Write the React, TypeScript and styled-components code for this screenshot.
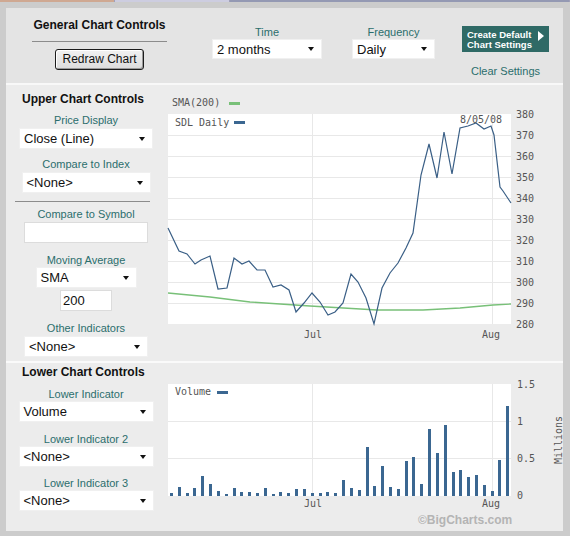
import styled, { createGlobalStyle } from 'styled-components';

const GlobalStyle = createGlobalStyle`
    body {
        margin: 0;
        background: #cccccc;
        font-family: "Liberation Sans", Arial, sans-serif;
    }
`;

const TEAL = '#2b6e6c';
const LINE_BLUE = '#3a5f86';
const BAR_BLUE = '#3b6791';
const SMA_GREEN = '#78c078';
const AXIS_TEXT = '#555555';
const MONO = '"DejaVu Sans Mono", monospace';

const Page = styled.div`
    width: 570px;
    height: 536px;
    background: #cccccc;
`;

const TabStrip = styled.div`
    display: flex;
    height: 2px;
`;

const Tab = styled.div<{ $color: string; $w?: number }>`
    background: ${(p) => p.$color};
    ${(p) => (p.$w ? `width: ${p.$w}px;` : 'flex: 1;')}
    border-right: 1px solid #a0a0b8;
`;

const Panel = styled.div`
    margin: 6px 7px 0 6px;
    width: 557px;
    background: #ececec;
`;

const Header = styled.div`
    display: flex;
    align-items: flex-start;
    box-sizing: border-box;
    height: 77px;
    padding-top: 10px;
    background: #e4e4e4;
    border-bottom: 2px solid #f8f8f8;
`;

const GeneralBlock = styled.div`
    display: flex;
    flex-direction: column;
    align-items: center;
    width: 135px;
    margin-left: 26px;
`;

const GeneralTitle = styled.div`
    align-self: stretch;
    font-size: 12px;
    font-weight: bold;
    line-height: 14px;
    text-align: center;
    color: #111;
    padding-bottom: 9px;
    border-bottom: 1px solid #8c8c8c;
`;

const RedrawButton = styled.div`
    margin-top: 7px;
    box-sizing: border-box;
    width: 89px;
    height: 21px;
    line-height: 19px;
    text-align: center;
    font-size: 12px;
    color: #111;
    background: linear-gradient(#f2f2f2, #dcdcdc);
    border: 1px solid #1c1c1c;
    border-radius: 3px;
    box-shadow: inset -1px -1px 0 #9a9a9a, inset 1px 1px 0 #ffffff;
`;

const FieldGroup = styled.div<{ $ml: number }>`
    display: flex;
    flex-direction: column;
    align-items: center;
    margin-left: ${(p) => p.$ml}px;
    margin-top: 8px;
`;

const Label = styled.div<{ $mt?: number }>`
    font-size: 11px;
    line-height: 13px;
    color: ${TEAL};
    text-align: center;
    margin-top: ${(p) => p.$mt ?? 0}px;
    white-space: nowrap;
`;

const SelectBox = styled.div<{ $w: number; $h?: number; $mt?: number }>`
    display: flex;
    align-items: center;
    justify-content: space-between;
    box-sizing: border-box;
    width: ${(p) => p.$w}px;
    height: ${(p) => p.$h ?? 21}px;
    margin-top: ${(p) => p.$mt ?? 0}px;
    padding-left: 4px;
    background: #ffffff;
    border: 1px solid #f0f0f0;
    font-size: 13px;
    color: #111;

    &::after {
        content: '';
        margin-right: 7px;
        border-left: 3.5px solid transparent;
        border-right: 3.5px solid transparent;
        border-top: 4px solid #111;
    }
`;

const TextBox = styled.div<{ $w: number; $mt?: number }>`
    box-sizing: border-box;
    width: ${(p) => p.$w}px;
    height: 21px;
    margin-top: ${(p) => p.$mt ?? 0}px;
    padding-left: 2px;
    line-height: 20px;
    background: #ffffff;
    border: 1px solid #dcdcdc;
    font-size: 13px;
    color: #111;
`;

const SettingsGroup = styled.div`
    display: flex;
    flex-direction: column;
    align-items: center;
    margin-left: 27px;
    margin-top: 8px;
    width: 87px;
`;

const CreateButton = styled.div`
    display: flex;
    align-items: flex-start;
    justify-content: space-between;
    box-sizing: border-box;
    width: 87px;
    height: 26px;
    padding: 4px 5px 0 5px;
    background: #2f6a66;
    color: #ffffff;
    font-size: 9.5px;
    font-weight: bold;
    line-height: 10px;
    white-space: nowrap;
`;

const Arrow = styled.span`
    margin-top: 1px;
    border-top: 5px solid transparent;
    border-bottom: 5px solid transparent;
    border-left: 6px solid #ffffff;
`;

const ClearLink = styled.div`
    margin-top: 13px;
    font-size: 11px;
    line-height: 13px;
    color: ${TEAL};
    white-space: nowrap;
`;

const Section = styled.div<{ $h: number; $divider?: boolean }>`
    display: flex;
    height: ${(p) => p.$h}px;
    ${(p) => (p.$divider ? 'border-bottom: 2px solid #fafafa;' : '')}
`;

const Controls = styled.div`
    display: flex;
    flex-direction: column;
    align-items: center;
    width: 160px;
`;

const SectionTitle = styled.div<{ $mt: number }>`
    align-self: flex-start;
    margin: ${(p) => p.$mt}px 0 0 16px;
    font-size: 12px;
    font-weight: bold;
    line-height: 14px;
    color: #111;
`;

const Divider = styled.div`
    align-self: flex-start;
    margin: 8px 0 0 9px;
    width: 135px;
    height: 1px;
    background: #8c8c8c;
`;

const ChartBox = styled.div`
    width: 397px;
`;

const priceLine: [number, number][] = [
    [168, 228], [179, 251], [187, 254], [195, 264], [201, 260], [210, 256], [218, 289],
    [227, 288], [234, 258], [242, 264], [249, 261], [257, 270], [265, 270], [273, 287],
    [281, 285], [289, 290], [296, 312], [304, 303], [312, 293], [320, 302], [328, 315],
    [335, 312], [343, 303], [351, 274], [358, 282], [366, 298], [374, 324], [382, 288],
    [390, 273], [398, 263], [406, 248], [413, 233], [421, 175], [429, 144], [437, 178],
    [444, 132], [452, 174], [460, 128], [468, 126], [476, 123], [484, 129], [491, 126],
    [494, 135], [500, 187], [503, 191], [511, 203],
];

const smaLine: [number, number][] = [
    [168, 293], [210, 297], [250, 302], [310, 306], [377, 310], [423, 310],
    [460, 308], [493, 305], [511, 304],
];

const volumeTops = [
    493, 487, 493, 488, 476, 484, 491, 494, 488, 492, 492, 493, 488, 494, 492, 493,
    489, 489, 493, 493, 492, 493, 480, 488, 490, 447, 486, 466, 487, 489, 461, 457,
    484, 429, 453, 425, 472, 470, 477, 475, 485, 491, 460, 406,
];

const toPoints = (pts: [number, number][]) => pts.map(([x, y]) => `${x},${y}`).join(' ');

function UpperChart() {
    const grid = [135, 156, 177, 198, 219, 240, 261, 282, 303];
    const labels = [380, 370, 360, 350, 340, 330, 320, 310, 300, 290, 280];
    return (
        <svg width="397" height="276" viewBox="166 85 397 276" fontFamily={MONO} fontSize="10">
            <text x="172" y="106" fill={AXIS_TEXT}>SMA(200)</text>
            <rect x="229" y="102" width="11" height="3" fill={SMA_GREEN} />
            <rect x="168" y="114" width="343" height="210" fill="#ffffff" />
            {grid.map((y) => (
                <line key={y} x1="168" x2="511" y1={y + 0.5} y2={y + 0.5} stroke="#e8e8e8" />
            ))}
            <line x1="312.5" x2="312.5" y1="114" y2="324" stroke="#e8e8e8" />
            <line x1="492.5" x2="492.5" y1="114" y2="324" stroke="#e8e8e8" />
            <text x="175" y="126" fill={AXIS_TEXT}>SDL Daily</text>
            <rect x="234" y="121" width="11" height="3" fill={BAR_BLUE} />
            <polyline points={toPoints(smaLine)} fill="none" stroke={SMA_GREEN} strokeWidth="1.3" />
            <polyline points={toPoints(priceLine)} fill="none" stroke={LINE_BLUE} strokeWidth="1.2" />
            <text x="460" y="123" fill={AXIS_TEXT}>8/05/08</text>
            {labels.map((v, i) => (
                <text key={v} x="516" y={118 + i * 21} fill={AXIS_TEXT}>{v}</text>
            ))}
            <text x="304" y="338" fill={AXIS_TEXT}>Jul</text>
            <text x="482" y="338" fill={AXIS_TEXT}>Aug</text>
        </svg>
    );
}

function LowerChart() {
    const axis = [['1.5', 388], ['1', 425], ['0.5', 462], ['0', 499]] as const;
    return (
        <svg width="397" height="168" viewBox="166 363 397 168" fontFamily={MONO} fontSize="10">
            <rect x="168" y="384" width="343" height="112" fill="#ffffff" />
            <line x1="168" x2="511" y1="421.5" y2="421.5" stroke="#e8e8e8" />
            <line x1="168" x2="511" y1="458.5" y2="458.5" stroke="#e8e8e8" />
            <line x1="312.5" x2="312.5" y1="384" y2="496" stroke="#e8e8e8" />
            <line x1="492.5" x2="492.5" y1="384" y2="496" stroke="#e8e8e8" />
            <text x="175" y="395" fill={AXIS_TEXT}>Volume</text>
            <rect x="217" y="391" width="11" height="3" fill={BAR_BLUE} />
            {volumeTops.map((top, i) => {
                const cx = 171.5 + i * 7.82;
                return <rect key={i} x={Math.round(cx - 1.5)} y={top} width="3" height={496 - top} fill={BAR_BLUE} />;
            })}
            {axis.map(([t, y]) => (
                <text key={t} x="517" y={y} fill={AXIS_TEXT}>{t}</text>
            ))}
            <text x="0" y="0" fill={AXIS_TEXT} textAnchor="middle" transform="translate(562 440) rotate(-90)">Millions</text>
            <text x="304" y="507" fill={AXIS_TEXT}>Jul</text>
            <text x="482" y="507" fill={AXIS_TEXT}>Aug</text>
            <text x="418" y="524" fill="#b4b4b4" fontFamily='"Liberation Sans", Arial, sans-serif' fontSize="12" fontWeight="bold">©BigCharts.com</text>
        </svg>
    );
}

export default function App() {
    return (
        <Page>
            <GlobalStyle />
            <TabStrip>
                <Tab $color="#cfa892" $w={114} />
                <Tab $color="#cdcde0" $w={114} />
                <Tab $color="#9499b3" />
            </TabStrip>
            <Panel>
                <Header>
                    <GeneralBlock>
                        <GeneralTitle>General Chart Controls</GeneralTitle>
                        <RedrawButton>Redraw Chart</RedrawButton>
                    </GeneralBlock>
                    <FieldGroup $ml={45}>
                        <Label>Time</Label>
                        <SelectBox $w={110} $h={20}>2 months</SelectBox>
                    </FieldGroup>
                    <FieldGroup $ml={30}>
                        <Label>Frequency</Label>
                        <SelectBox $w={83} $h={20}>Daily</SelectBox>
                    </FieldGroup>
                    <SettingsGroup>
                        <CreateButton>
                            <span>Create Default<br />Chart Settings</span>
                            <Arrow />
                        </CreateButton>
                        <ClearLink>Clear Settings</ClearLink>
                    </SettingsGroup>
                </Header>

                <Section $h={276} $divider>
                    <Controls>
                        <SectionTitle $mt={7}>Upper Chart Controls</SectionTitle>
                        <Label $mt={8}>Price Display</Label>
                        <SelectBox $w={134} $mt={1}>Close (Line)</SelectBox>
                        <Label $mt={9}>Compare to Index</Label>
                        <SelectBox $w={129} $mt={1}>&lt;None&gt;</SelectBox>
                        <Divider />
                        <Label $mt={6}>Compare to Symbol</Label>
                        <TextBox $w={124} $mt={1} />
                        <Label $mt={11}>Moving Average</Label>
                        <SelectBox $w={101}>SMA</SelectBox>
                        <TextBox $w={52} $mt={2}>200</TextBox>
                        <Label $mt={11}>Other Indicators</Label>
                        <SelectBox $w={124} $mt={1}>&lt;None&gt;</SelectBox>
                    </Controls>
                    <ChartBox>
                        <UpperChart />
                    </ChartBox>
                </Section>

                <Section $h={168}>
                    <Controls>
                        <SectionTitle $mt={2}>Lower Chart Controls</SectionTitle>
                        <Label $mt={9}>Lower Indicator</Label>
                        <SelectBox $w={135}>Volume</SelectBox>
                        <Label $mt={11}>Lower Indicator 2</Label>
                        <SelectBox $w={135}>&lt;None&gt;</SelectBox>
                        <Label $mt={10}>Lower Indicator 3</Label>
                        <SelectBox $w={135}>&lt;None&gt;</SelectBox>
                    </Controls>
                    <ChartBox>
                        <LowerChart />
                    </ChartBox>
                </Section>
            </Panel>
        </Page>
    );
}
